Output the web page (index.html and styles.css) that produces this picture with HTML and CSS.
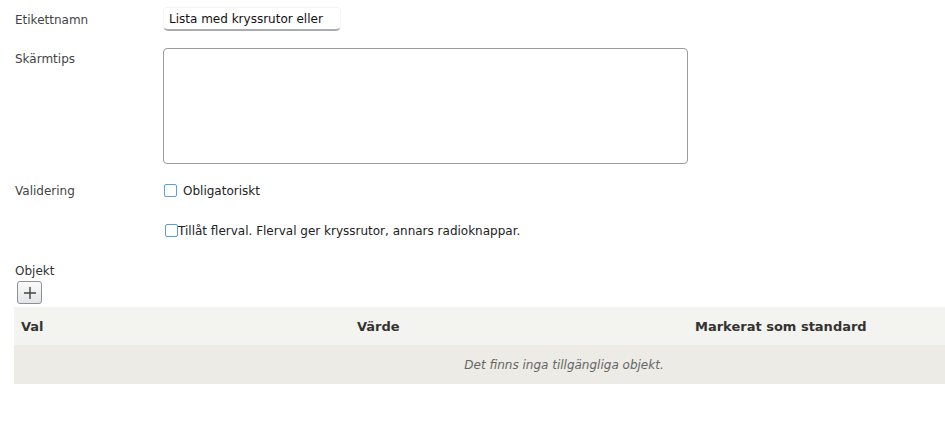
FILE: index.html
```html
<!DOCTYPE html>
<html lang="sv">
<head>
    <meta charset="UTF-8">
    <meta name="viewport" content="width=device-width, initial-scale=1.0">
    <title>Lista med kryssrutor</title>
    <link rel="stylesheet" href="styles.css">
</head>
<body>
    <div class="form">
        <div class="row row-name">
            <label class="label" for="labelName">Etikettnamn</label>
            <input type="text" id="labelName" class="text-input" value="Lista med kryssrutor eller">
        </div>
        <div class="row row-tip">
            <label class="label" for="tooltip">Skärmtips</label>
            <textarea id="tooltip" class="tip-area"></textarea>
        </div>
        <div class="row row-check">
            <span class="label">Validering</span>
            <label class="check">
                <input type="checkbox" class="box">
                <span>Obligatoriskt</span>
            </label>
        </div>
        <div class="row row-multi">
            <span class="label"></span>
            <label class="check tight">
                <input type="checkbox" class="box">
                <span>Tillåt flerval. Flerval ger kryssrutor, annars radioknappar.</span>
            </label>
        </div>

        <div class="objects">
            <div class="objects-title">Objekt</div>
            <button class="add-btn" title="Lägg till">
                <svg width="14" height="14" viewBox="0 0 14 14">
                    <path d="M7 1v12M1 7h12" stroke="#444" stroke-width="1.4" fill="none"/>
                </svg>
            </button>
            <table class="items">
                <thead>
                    <tr>
                        <th class="col-val">Val</th>
                        <th class="col-value">Värde</th>
                        <th>Markerat som standard</th>
                    </tr>
                </thead>
                <tbody>
                    <tr>
                        <td colspan="3" class="empty">Det finns inga tillgängliga objekt.</td>
                    </tr>
                </tbody>
            </table>
        </div>
    </div>
</body>
</html>
```

FILE: styles.css
```css
body {
    margin: 0;
    font-family: "DejaVu Sans", Verdana, sans-serif;
    font-size: 12px;
    color: #333;
    background-color: #fff;
    overflow: hidden;
}

.form {
    padding: 7px 0 0 14px;
}

.row {
    display: flex;
    align-items: center;
}

.label {
    width: 148px;
    padding: 2px 0 0 1px;
    flex-shrink: 0;
    color: #444;
}

.text-input {
    width: 178px;
    height: 24px;
    box-sizing: border-box;
    margin: 0;
    padding: 1px 5px 0;
    font-family: inherit;
    font-size: 12px;
    color: #111;
    border: 1px solid #f3f3f3;
    border-bottom: 2px solid #a9adb0;
    border-radius: 5px;
    background: #fff;
    outline: none;
}

.row-tip {
    margin-top: 17px;
    align-items: flex-start;
}

.row-tip .label {
    padding-top: 4px;
}

.tip-area {
    width: 525px;
    height: 116px;
    box-sizing: border-box;
    margin: 0;
    border: 1px solid #9a9da0;
    border-radius: 4px;
    resize: none;
    background: #fff;
}

.row-check {
    margin-top: 16px;
    height: 20px;
}

.row-multi {
    margin-top: 20px;
    height: 20px;
}

.check {
    display: flex;
    align-items: center;
    gap: 6px;
    color: #222;
}

.check span {
    padding-top: 2px;
}

.check.tight {
    gap: 0;
    padding-left: 1px;
}

.box {
    appearance: none;
    -webkit-appearance: none;
    width: 13px;
    height: 13px;
    margin: 0 0 0 1px;
    border: 1.5px solid #5a9ee0;
    border-radius: 2px;
    background: #fff;
    box-sizing: border-box;
}

.objects {
    margin-top: 22px;
}

.objects-title {
    line-height: 16px;
    padding: 1px 0 0 1px;
}

.add-btn {
    display: flex;
    align-items: center;
    justify-content: center;
    width: 25px;
    height: 23px;
    margin: 2px 0 0 3px;
    padding: 0;
    border: 1px solid #8e9194;
    border-radius: 3px;
    background: linear-gradient(#fbfbfb, #e3e4e6);
    cursor: pointer;
}

.items {
    width: 100%;
    margin-top: 3px;
    border-collapse: collapse;
    table-layout: fixed;
}

.items th {
    height: 38px;
    padding: 0 7px;
    text-align: left;
    font-weight: bold;
    font-size: 13px;
    color: #333;
    background-color: #f3f3ef;
}

.items th.col-val {
    width: 322px;
}

.items th.col-value {
    width: 324px;
}

.items td.empty {
    height: 37px;
    padding-left: 170px;
    text-align: center;
    font-style: italic;
    color: #666;
    background-color: #ecebe5;
}
```
